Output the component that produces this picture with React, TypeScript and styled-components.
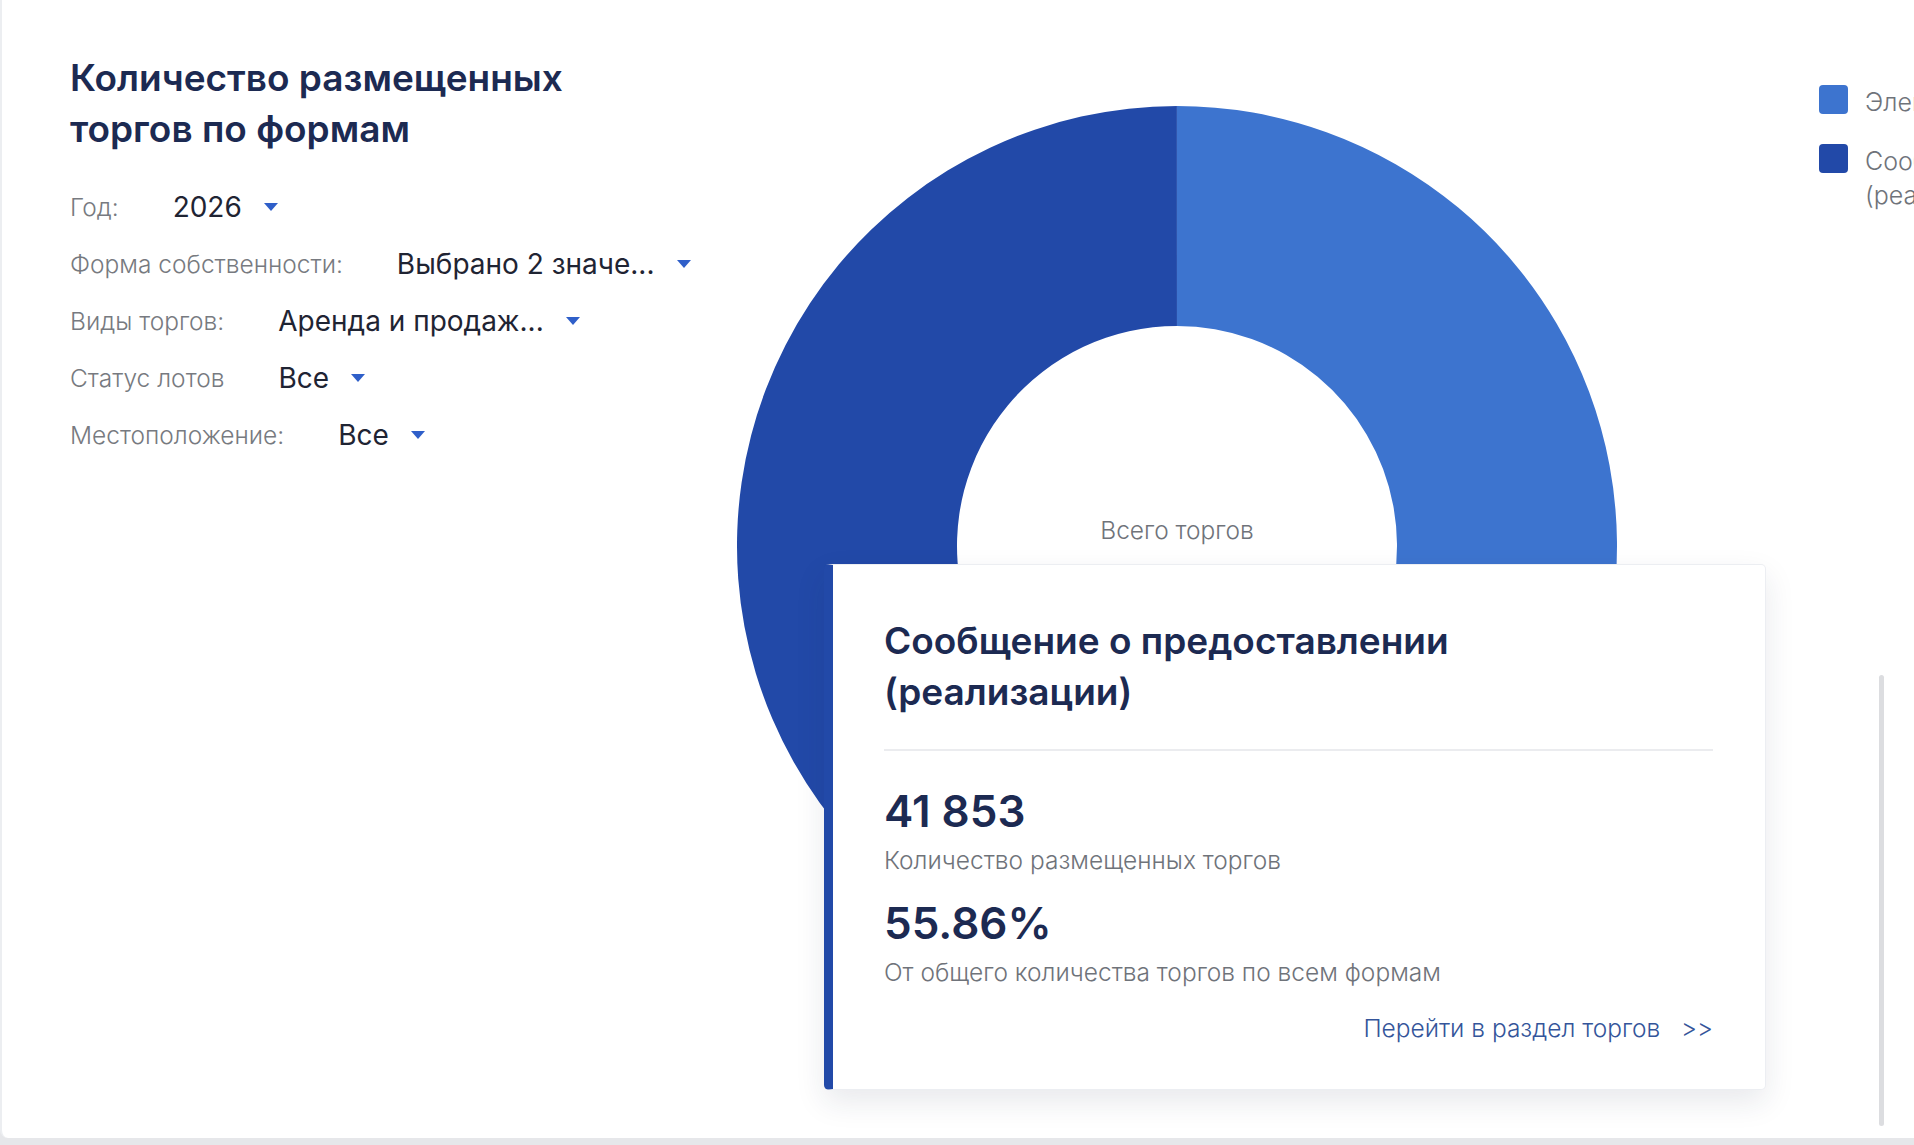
import React from 'react';
import styled, { createGlobalStyle } from 'styled-components';

const Global = createGlobalStyle`
  html, body { margin: 0; padding: 0; background: #e6e7ea; }
  body { font-family: Inter, 'Noto Sans', sans-serif; }
`;

const Card = styled.div`
  position: relative;
  display: flex;
  align-items: flex-start;
  height: 1138px;
  width: 1914px;
  box-sizing: border-box;
  padding: 52px 0 0 68px;
  background: #fff;
  border-left: 2px solid #eceef1;
  border-bottom-left-radius: 8px;
  overflow: hidden;
`;

const Left = styled.div`
  width: 667px;
  flex-shrink: 0;
`;

const Title = styled.h2`
  margin: 0 0 24px;
  font-size: 37px;
  line-height: 51px;
  font-weight: 600;
  color: #1c2a52;
  letter-spacing: 0;
`;

const Filter = styled.div`
  display: flex;
  align-items: center;
  gap: 54px;
  height: 57px;
`;

const Label = styled.span`
  font-size: 24.5px;
  font-weight: 300;
  color: #777a80;
`;

const Value = styled.span`
  display: flex;
  align-items: center;
  gap: 22px;
  font-size: 28px;
  font-weight: 400;
  color: #1f2433;
`;

const Caret = styled.span`
  width: 0;
  height: 0;
  border-left: 7px solid transparent;
  border-right: 7px solid transparent;
  border-top: 8px solid #2f5fc9;
`;

const Chart = styled.div`
  position: relative;
  margin-top: 54px;
  width: 880px;
  height: 880px;
  flex-shrink: 0;
`;

const Tooltip = styled.div`
  position: absolute;
  left: 87px;
  top: 458px;
  width: 942px;
  height: 526px;
  box-sizing: border-box;
  padding: 50px 52px 0 51px;
  background: #fff;
  border: 1px solid #eceef2;
  border-left: 9px solid #2249a8;
  border-radius: 5px;
  box-shadow: 0 12px 30px rgba(30, 40, 70, 0.1);
`;

const TipTitle = styled.div`
  font-size: 37px;
  line-height: 51px;
  font-weight: 600;
  color: #1c2a52;
  padding-bottom: 32px;
  border-bottom: 2px solid #ebecef;
`;

const Big = styled.div<{ $top: number }>`
  margin-top: ${p => p.$top}px;
  font-size: 44px;
  line-height: 52px;
  font-weight: 600;
  color: #1c2a52;
`;

const Sub = styled.div`
  margin-top: 6px;
  font-size: 24.5px;
  line-height: 34px;
  font-weight: 300;
  color: #6f737a;
`;

const Link = styled.a`
  display: block;
  margin-top: 24px;
  text-align: right;
  font-size: 24.5px;
  font-weight: 300;
  color: #34559a;
  text-decoration: none;
`;

const Legend = styled.div`
  margin: 33px 0 0 202px;
  display: flex;
  flex-direction: column;
  gap: 25px;
  flex-shrink: 0;
  width: 560px;
`;

const LegendItem = styled.div`
  display: flex;
  align-items: flex-start;
  gap: 17px;
  font-size: 25px;
  line-height: 34px;
  font-weight: 300;
  color: #6f737a;
`;

const Swatch = styled.span<{ $c: string }>`
  width: 29px;
  height: 29px;
  border-radius: 4px;
  background: ${p => p.$c};
  flex-shrink: 0;
`;

const Scroll = styled.div`
  position: absolute;
  left: 1877px;
  top: 675px;
  width: 5px;
  height: 451px;
  border-radius: 3px;
  background: #dcdde0;
`;

const C = 440;
const R = 440;
const r = 220;

function arc(a0: number, a1: number) {
  const pt = (a: number, rad: number) => {
    const t = ((a - 90) * Math.PI) / 180;
    return `${C + rad * Math.cos(t)} ${C + rad * Math.sin(t)}`;
  };
  const large = a1 - a0 > 180 ? 1 : 0;
  return `M ${pt(a0, R)} A ${R} ${R} 0 ${large} 1 ${pt(a1, R)} L ${pt(a1, r)} A ${r} ${r} 0 ${large} 0 ${pt(a0, r)} Z`;
}

const filters = [
  ['Год:', '2026'],
  ['Форма собственности:', 'Выбрано 2 значе...'],
  ['Виды торгов:', 'Аренда и продаж...'],
  ['Статус лотов', 'Все'],
  ['Местоположение:', 'Все'],
];

export default function App() {
  const split = 360 * 0.4414;
  return (
    <>
      <Global />
      <Card>
        <Left>
          <Title>
            Количество размещенных
            <br />
            торгов по формам
          </Title>
          {filters.map(([l, v]) => (
            <Filter key={l}>
              <Label>{l}</Label>
              <Value>
                {v}
                <Caret />
              </Value>
            </Filter>
          ))}
        </Left>
        <Chart>
          <svg width="880" height="880" viewBox="0 0 880 880">
            <path d={arc(0, split)} fill="#3d74cf" />
            <path d={arc(split, 359.99)} fill="#2249a8" />
            <text x={C} y={C - 7} textAnchor="middle" fontSize="24.5" fontWeight="300" fill="#6f737a" fontFamily="Inter, 'Noto Sans', sans-serif">
              Всего торгов
            </text>
          </svg>
          <Tooltip>
            <TipTitle>
              Сообщение о предоставлении
              <br />
              (реализации)
            </TipTitle>
            <Big $top={34}>41 853</Big>
            <Sub>Количество размещенных торгов</Sub>
            <Big $top={20}>55.86%</Big>
            <Sub>От общего количества торгов по всем формам</Sub>
            <Link href="#">Перейти в раздел торгов&nbsp;&nbsp;&nbsp;&gt;&gt;</Link>
          </Tooltip>
        </Chart>
        <Legend>
          <LegendItem>
            <Swatch $c="#3d74cf" />
            Электронные торги
          </LegendItem>
          <LegendItem>
            <Swatch $c="#2249a8" />
            <span>
              Сообщение о предоставлении
              <br />
              (реализации)
            </span>
          </LegendItem>
        </Legend>
        <Scroll />
      </Card>
    </>
  );
}
